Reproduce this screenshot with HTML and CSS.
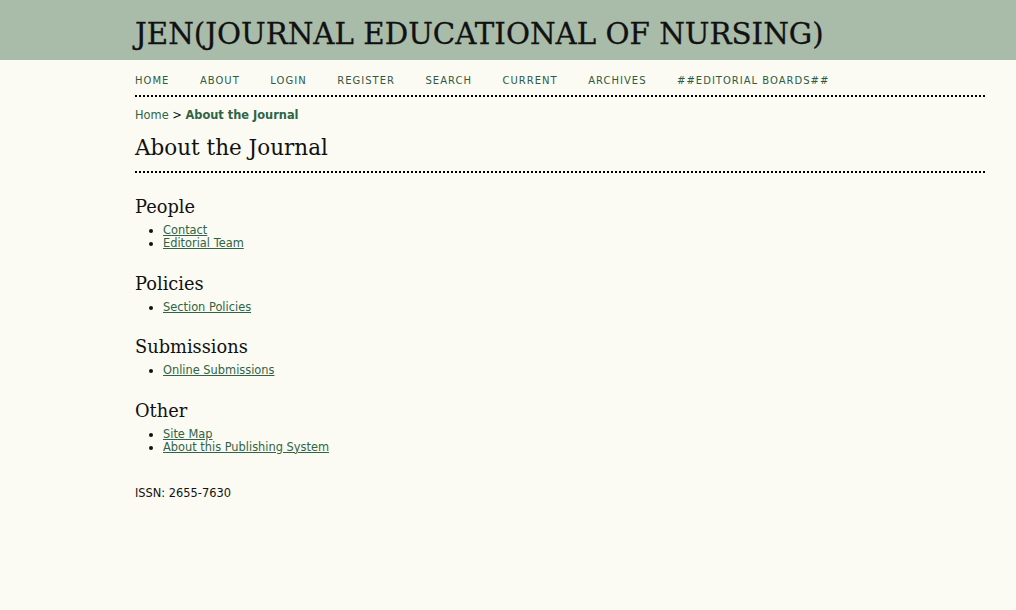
FILE: index.html
```html
<!DOCTYPE html>
<html lang="en">
<head>
  <meta charset="UTF-8" />
  <title>About the Journal</title>
  <link rel="stylesheet" href="styles.css">
</head>
<body>

  <div class="header">
    <h1>JEN(JOURNAL EDUCATIONAL OF NURSING)</h1>
  </div>

  <div class="main">
    <ul class="navbar">
      <li><a href="#">Home</a></li>
      <li><a href="#">About</a></li>
      <li><a href="#">Login</a></li>
      <li><a href="#">Register</a></li>
      <li><a href="#">Search</a></li>
      <li><a href="#">Current</a></li>
      <li><a href="#">Archives</a></li>
      <li><a href="#">##Editorial Boards##</a></li>
    </ul>

    <div class="breadcrumb">
      <a href="#">Home</a> &gt; <a href="#" class="current">About the Journal</a>
    </div>

    <h2>About the Journal</h2>

    <div class="content">
      <div class="section">
        <h3>People</h3>
        <ul>
          <li><a href="#">Contact</a></li>
          <li><a href="#">Editorial Team</a></li>
        </ul>
      </div>

      <div class="section">
        <h3>Policies</h3>
        <ul>
          <li><a href="#">Section Policies</a></li>
        </ul>
      </div>

      <div class="section">
        <h3>Submissions</h3>
        <ul>
          <li><a href="#">Online Submissions</a></li>
        </ul>
      </div>

      <div class="section">
        <h3>Other</h3>
        <ul>
          <li><a href="#">Site Map</a></li>
          <li><a href="#">About this Publishing System</a></li>
        </ul>
      </div>

      <p class="issn">ISSN: 2655-7630</p>
    </div>
  </div>

</body>
</html>
```

FILE: styles.css
```css
body {
  margin: 0;
  background-color: #fbfbf3;
  font-family: "DejaVu Sans", Verdana, sans-serif;
  font-size: 11.4px;
  color: #111;
}

a {
  color: #2f6447;
}

.header {
  background-color: #a9bba9;
  height: 60px;
  padding-left: 135px;
}

.header h1 {
  margin: 0;
  padding-top: 14px;
  font-family: "DejaVu Serif", Georgia, serif;
  font-weight: normal;
  font-size: 29.3px;
  line-height: 40px;
  color: #111;
  -webkit-text-stroke: 0.3px #111;
}

.main {
  width: 850px;
  margin-left: 135px;
}

.navbar {
  list-style: none;
  margin: 0;
  padding: 13px 0 8px 0;
  display: flex;
  border-bottom: 2px dotted #000;
}

.navbar li {
  margin-right: 30.6px;
}

.navbar a {
  text-decoration: none;
  text-transform: uppercase;
  font-size: 10px;
  letter-spacing: 1px;
  color: #2f5a44;
}

.breadcrumb {
  margin-top: 11px;
}

.breadcrumb a {
  text-decoration: none;
}

.breadcrumb .current {
  font-weight: bold;
}

h2 {
  margin: 13px 0 0 0;
  padding-bottom: 11px;
  border-bottom: 2px dotted #000;
  font-family: "DejaVu Serif", Georgia, serif;
  font-weight: normal;
  font-size: 21.5px;
}

.content {
  padding-top: 22px;
}

.section {
  margin-bottom: 21.5px;
}

h3 {
  margin: 0 0 5px 0;
  font-family: "DejaVu Serif", Georgia, serif;
  font-weight: normal;
  font-size: 17.8px;
  line-height: 24px;
}

.section ul {
  margin: 0;
  padding-left: 28px;
  line-height: 13px;
}

.issn {
  margin-top: 32px;
}
```
